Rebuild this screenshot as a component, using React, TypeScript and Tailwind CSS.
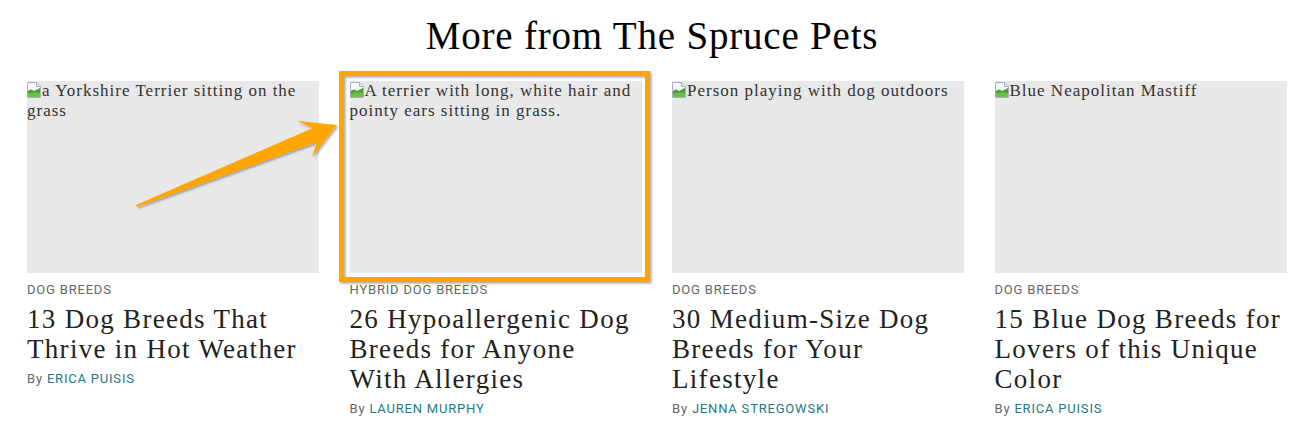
import React from 'react';

type Card = {
  alt: string;
  category: string;
  title: string;
  author: string;
};

const cards: Card[] = [
  {
    alt: 'a Yorkshire Terrier sitting on the grass',
    category: 'Dog Breeds',
    title: '13 Dog Breeds That Thrive in Hot Weather',
    author: 'Erica Puisis',
  },
  {
    alt: 'A terrier with long, white hair and pointy ears sitting in grass.',
    category: 'Hybrid Dog Breeds',
    title: '26 Hypoallergenic Dog Breeds for Anyone With Allergies',
    author: 'Lauren Murphy',
  },
  {
    alt: 'Person playing with dog outdoors',
    category: 'Dog Breeds',
    title: '30 Medium-Size Dog Breeds for Your Lifestyle',
    author: 'Jenna Stregowski',
  },
  {
    alt: 'Blue Neapolitan Mastiff',
    category: 'Dog Breeds',
    title: '15 Blue Dog Breeds for Lovers of this Unique Color',
    author: 'Erica Puisis',
  },
];

const BrokenImage = () => (
  <svg width="14" height="16" viewBox="0 0 14 16" className="inline-block align-[-2px] mr-px">
    <path d="M0.5 0.5 H9.5 L13.5 4.5 V15.5 H0.5 Z" fill="#f4f7fb" stroke="#a5b1c0" />
    <path d="M9.5 0.5 V4.5 H13.5" fill="#dde4ec" stroke="#a5b1c0" />
    <path d="M1 9 Q4 6 7 9 L13 6 V15 H1 Z" fill="#4a9f38" />
    <path d="M1 12 Q5 9 13 11 V15 H1 Z" fill="#6ebd4b" />
  </svg>
);

const Annotation = () => (
  <svg
    className="absolute left-0 top-0 pointer-events-none"
    width="1304"
    height="438"
    viewBox="0 0 1304 438"
  >
    <defs>
      <filter id="shadow" x="-10%" y="-10%" width="130%" height="130%">
        <feDropShadow dx="1.5" dy="1.5" stdDeviation="1" floodColor="#000" floodOpacity="0.35" />
      </filter>
    </defs>
    <rect
      x="341.5"
      y="73.5"
      width="306"
      height="206"
      fill="none"
      stroke="#ffa500"
      strokeWidth="5"
      filter="url(#shadow)"
    />
    <path
      d="M136 205 L313 128 L297 121 L337 125 L312 157 L317 142 L137 207 Z"
      fill="#ffa500"
      filter="url(#shadow)"
    />
  </svg>
);

export default function App() {
  return (
    <div className="relative w-[1304px] h-[438px] bg-white overflow-hidden">
      <h2 className="pt-[13px] text-center text-[39px] leading-[46px] tracking-[0.8px] text-black font-['Liberation_Serif',serif]">
        More from The Spruce Pets
      </h2>
      <div className="mt-[22px] pl-[27px] flex gap-[30.5px]">
        {cards.map((card) => (
          <div key={card.title} className="w-[292px] flex flex-col">
            <div className="h-[192px] bg-[#e8e8e8] text-[17px] leading-[20px] tracking-[1px] text-[#333] font-['Liberation_Serif',serif]">
              <BrokenImage />
              {card.alt}
            </div>
            <div className="mt-[10px] text-[13px] leading-[14px] uppercase tracking-[0.8px] text-[#666] font-['Roboto',sans-serif]">
              {card.category}
            </div>
            <h3 className="mt-[7px] pr-[4px] text-[27px] leading-[30px] tracking-[1.3px] text-[#222] font-['Liberation_Serif',serif]">
              {card.title}
            </h3>
            <div className="mt-[8px] text-[13px] leading-[14px] tracking-[0.8px] text-[#666] font-['Roboto',sans-serif]">
              By <span className="uppercase text-[#1b7a85]">{card.author}</span>
            </div>
          </div>
        ))}
      </div>
      <Annotation />
    </div>
  );
}
